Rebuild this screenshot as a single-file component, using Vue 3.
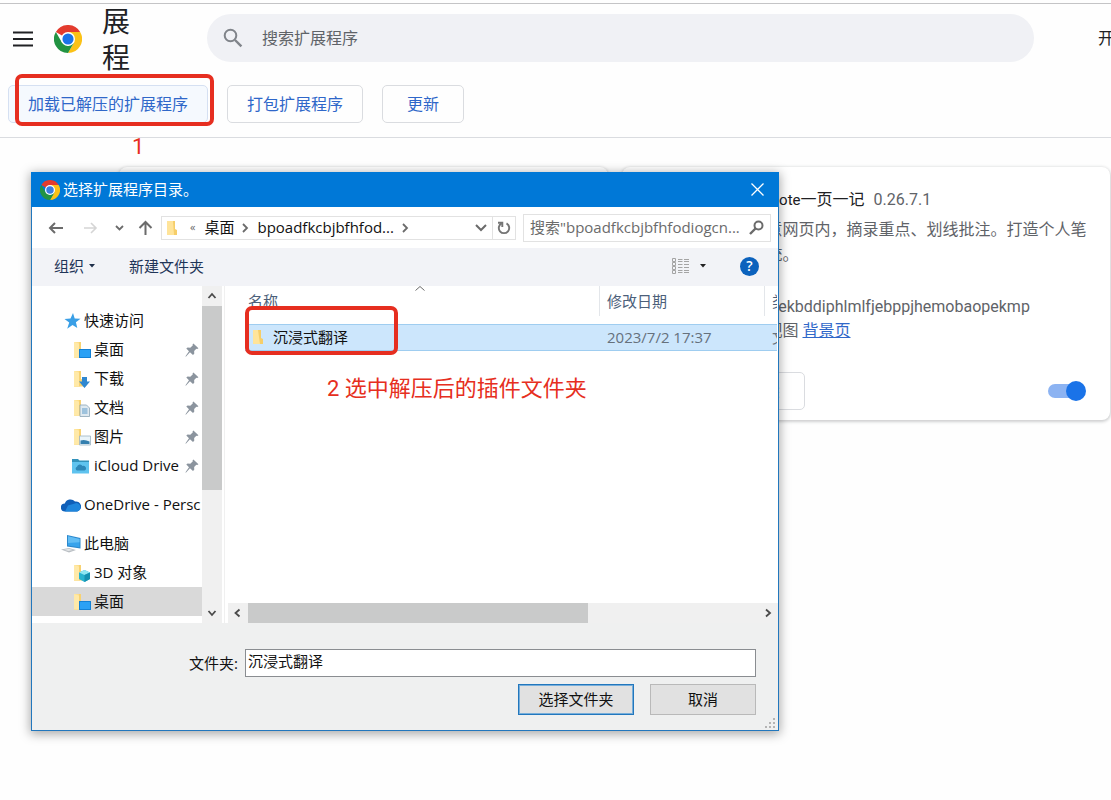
<script setup>
import { ref } from 'vue'

const query = ref('')
const folder = ref('沉浸式翻译')
const enabled = ref(true)
const dialogQuery = ref('')

const groups = [
  [
    { icon: 'star', label: '快速访问' },
    { icon: 'desktop', label: '桌面', child: true, pinned: true },
    { icon: 'download', label: '下载', child: true, pinned: true },
    { icon: 'document', label: '文档', child: true, pinned: true },
    { icon: 'picture', label: '图片', child: true, pinned: true },
    { icon: 'icloud', label: 'iCloud Drive', child: true, pinned: true },
  ],
  [{ icon: 'onedrive', label: 'OneDrive - Persc' }],
  [
    { icon: 'pc', label: '此电脑' },
    { icon: 'cube', label: '3D 对象', child: true },
    { icon: 'desktop', label: '桌面', child: true, selected: true },
  ],
]
</script>

<template>
  <div class="page">
    <header class="top">
      <button class="burger" type="button" aria-label="菜单">
        <svg width="20" height="16" viewBox="0 0 20 16"><path d="M0 1.5h20M0 8h20M0 14.5h20" stroke="#202124" stroke-width="2" /></svg>
      </button>
      <svg class="logo" width="28" height="28" viewBox="0 0 48 48">
        <path d="M24 24 3.2 12A24 24 0 0 1 44.8 12z" fill="#e33b2e" />
        <path d="M24 12h20.8A24 24 0 0 1 24 48l10.4-18z" fill="#fbc116" />
        <path d="M34.4 30 24 48A24 24 0 0 1 3.2 12l10.4 18L24 36z" fill="#229342" />
        <circle cx="24" cy="24" r="12" fill="#fff" />
        <circle cx="24" cy="24" r="9.5" fill="#1a73e8" />
      </svg>
      <h1>展程</h1>
      <label class="search">
        <svg width="20" height="20" viewBox="0 0 20 20" fill="none" stroke="#80848a" stroke-width="2"><circle cx="7.5" cy="7.5" r="5.8" /><path d="m12 12 6.4 6.4" stroke-width="2.4" /></svg>
        <input v-model="query" type="text" placeholder="搜索扩展程序" aria-label="搜索扩展程序" />
      </label>
      <span class="dev">开</span>
    </header>

    <nav class="actions">
      <button type="button" class="hover">加载已解压的扩展程序</button>
      <button type="button">打包扩展程序</button>
      <button type="button">更新</button>
    </nav>

    <main class="cards">
      <article class="card"></article>
      <article class="card">
        <div class="info">
          <h2><span class="latin">PageNote</span>一页一记 <span class="version">0.26.7.1</span></h2>
          <p class="desc">在任意网页内，摘录重点、划线批注。打造个人笔记系统。</p>
          <p class="ids">ID：ipekbddiphlmlfjebppjhemobaopekmp</p>
          <p class="ids">检查视图 <a href="#">背景页</a></p>
        </div>
        <div class="card-foot">
          <button type="button">移除</button>
          <input v-model="enabled" type="checkbox" class="toggle" aria-label="启用" />
        </div>
      </article>
    </main>

    <section class="dialog" role="dialog" aria-labelledby="dlg-title">
      <div class="titlebar">
        <svg width="20" height="20" viewBox="0 0 48 48">
          <path d="M24 24 3.2 12A24 24 0 0 1 44.8 12z" fill="#e33b2e" />
          <path d="M24 12h20.8A24 24 0 0 1 24 48l10.4-18z" fill="#fbc116" />
          <path d="M34.4 30 24 48A24 24 0 0 1 3.2 12l10.4 18L24 36z" fill="#229342" />
          <circle cx="24" cy="24" r="12" fill="#fff" />
          <circle cx="24" cy="24" r="9" fill="#3b7de0" />
        </svg>
        <h2 id="dlg-title">选择扩展程序目录。</h2>
        <button type="button" aria-label="关闭">
          <svg width="13" height="13" viewBox="0 0 13 13"><path d="m.5.5 12 12m0-12-12 12" stroke="#fff" stroke-width="1.3" /></svg>
        </button>
      </div>

      <div class="navbar">
        <div class="arrows">
          <button type="button" aria-label="后退"><svg width="15" height="14" viewBox="0 0 15 14" fill="none" stroke="#6b6b6b" stroke-width="2"><path d="M15 7H2m5-5L2 7l5 5" /></svg></button>
          <button type="button" aria-label="前进"><svg width="15" height="14" viewBox="0 0 15 14" fill="none" stroke="#d5d5d5" stroke-width="1.6"><path d="M1 7h12M8 2l5 5-5 5" /></svg></button>
          <button type="button" aria-label="最近位置" class="recent"><svg width="9" height="6" viewBox="0 0 9 6" fill="none" stroke="#6b6b6b" stroke-width="1.8"><path d="m1 1 3.5 3.5L8 1" /></svg></button>
          <button type="button" aria-label="上移"><svg width="15" height="15" viewBox="0 0 15 15" fill="none" stroke="#6b6b6b" stroke-width="2"><path d="M7.5 15V2M1.500 8l6-6 6 6" /></svg></button>
        </div>
        <div class="address">
          <svg class="f" width="12" height="16" viewBox="0 0 12 16"><path d="M1 1h8v14H1z" fill="#ffe08c" /><path d="M7 1h2v8l2 1v5H1z" fill="#f6ce69" /><path d="M1 1h6l1 14H1z" fill="#ffe49a" /></svg>
          <span class="laquo">«</span>
          <span class="crumb">桌面</span>
          <svg class="sep" width="7" height="10" viewBox="0 0 7 10" fill="none" stroke="#6b6b6b" stroke-width="1.8"><path d="m1 1 4 4-4 4" /></svg>
          <span class="crumb">bpoadfkcbjbfhfod...</span>
          <svg class="sep" width="7" height="10" viewBox="0 0 7 10" fill="none" stroke="#6b6b6b" stroke-width="1.8"><path d="m1 1 4 4-4 4" /></svg>
          <button type="button" class="drop" aria-label="历史"><svg width="12" height="8" viewBox="0 0 12 8" fill="none" stroke="#6b6b6b" stroke-width="2"><path d="m1 1 5 5 5-5" /></svg></button>
          <button type="button" class="reload" aria-label="刷新"><svg width="14" height="14" viewBox="0 0 14 14" fill="none" stroke="#757575" stroke-width="1.9"><path d="M9.500 2.400a5.200 5.200 0 1 1-5 0" /><path d="M1 1.800h4.300v4.200" /></svg></button>
        </div>
        <label class="find">
          <input v-model="dialogQuery" type="text" placeholder="搜索&quot;bpoadfkcbjbfhfodiogcn..." aria-label="搜索" />
          <svg width="15" height="15" viewBox="0 0 15 15" fill="none" stroke="#6b6b6b"><circle cx="9.500" cy="5.500" r="4" stroke-width="2" /><path d="M6.500 8.500 1 14" stroke-width="2.400" /></svg>
        </label>
      </div>

      <div class="toolbar">
        <button type="button">组织 <svg width="6" height="4" viewBox="0 0 6 4"><path d="M0 0h6L3 3.500z" fill="#1f2f4a" /></svg></button>
        <button type="button">新建文件夹</button>
        <button type="button" class="view" aria-label="更改视图">
          <svg width="17" height="16" viewBox="0 0 17 16" fill="none" stroke="#a4a4a4"><path d="M.5 .5h3v3h-3zM.5 4.500h3v3h-3zM.5 8.500h3v3h-3zM.5 12.500h3v3h-3z" /><path d="M6 1.500h4.500m1.500 0h5M6 3.500h4.500m1.500 0h5M6 6.500h4.500m1.500 0h5M6 9.500h4.500m1.500 0h5M6 12.500h4.500m1.500 0h5M6 14.500h4.500m1.500 0h5" /></svg>
          <svg width="6" height="4" viewBox="0 0 6 4"><path d="M0 0h6L3 3.500z" fill="#222" /></svg>
        </button>
        <button type="button" class="help" aria-label="帮助">?</button>
      </div>

      <div class="body">
        <div class="tree">
          <ul v-for="(group, g) in groups" :key="g">
            <li v-for="(item, i) in group" :key="i" :class="{ child: item.child, selected: item.selected }">
              <svg class="ico" width="20" height="18" viewBox="0 0 20 18">
                <path v-if="item.icon === 'star'" d="m12 1 1.700 5.500 5.800.2-4.600 3.600 1.400 5.700-4.800-3-5.300 3.700 2-6.200L3.500 7l6-.6z" fill="#3a9fe6" />
                <g v-else-if="item.icon === 'onedrive'">
                  <path d="M4 15.500a4 4 0 0 1-.2-8A6 6 0 0 1 14 5.500 5 5 0 0 1 16 15.500z" fill="#0f5fb8" />
                  <path d="M7 9.500 15.500 7a4.400 4.400 0 0 1 1 8.500H4z" fill="#1f86dc" />
                </g>
                <g v-else-if="item.icon === 'pc'">
                  <path d="m6 0 13.500 3v10.500L6 11.500z" fill="#2c88cc" /><path d="m7 1.300 11.500 2.600v8.300L7 10.400z" fill="#37a3ec" /><path d="m7 1.300 11.500 2.600v3.400L7 8z" fill="#62bdf4" />
                  <path d="m0 14.500 8-1.500 7 2-7 2.500z" fill="#b9bec3" /><path d="m3 14.700 5-1 4 1.200-4.500 1.200z" fill="#e3e6e8" />
                </g>
                <g v-else-if="item.icon === 'icloud'">
                  <path d="M1 2h6l1.500 1.500H18V16H1z" fill="#3292bb" /><path d="M1 5h17v11.500H1z" fill="#5fc3ef" />
                  <path d="M6 13.500a2 2 0 0 1 0-3.800 3 3 0 0 1 5.500-.7 2.300 2.300 0 0 1 2 4.500z" fill="#2d87b8" />
                </g>
                <g v-else>
                  <path d="M3 1h6v15.500H3z" fill="#ffe08c" /><path d="M8 1h2v8l3 1v6.500H3z" fill="#f8d271" /><path d="m3 1 5 1.500v14H3z" fill="#ffe9a8" />
                  <g v-if="item.icon === 'desktop'"><path d="M8 8h12v9H8z" fill="#1482d6" /><path d="M9 9h10v7H9z" fill="#2ba1f5" /></g>
                  <path v-else-if="item.icon === 'download'" d="M11 7h5v4.500h3L13.500 18 8 11.500h3z" fill="#2f87d0" />
                  <g v-else-if="item.icon === 'document'"><path d="M9 6h6.500l3 3v8.500H9z" fill="#dfe9f0" stroke="#8ca4b5" stroke-width=".8" /><path d="M11 10h5.500m-5.500 2h5.500m-5.500 2h5.500" stroke="#5c9bc9" /></g>
                  <g v-else-if="item.icon === 'picture'"><path d="M8.500 8h11v9h-11z" fill="#e9f4fa" stroke="#9db4c2" stroke-width=".8" /><path d="M9.500 12.500q4-1.500 9 1V16h-9z" fill="#347fae" /></g>
                  <g v-else><path d="m13.500 6 5.500 2.500V15l-5.500 3L8 15V8.500z" fill="#29b3cf" /><path d="M13.500 6 19 8.500 13.500 11 8 8.500z" fill="#8fe6f2" /><path d="M13.500 11 19 8.500V15l-5.500 3z" fill="#1590b0" /></g>
                </g>
              </svg>
              <span>{{ item.label }}</span>
              <svg v-if="item.pinned" class="pin" width="14" height="14" viewBox="0 0 13 13"><path d="m7.800.5 4.700 4.300-1.200.7-.8-.2-2 2.200.1 2.500-1.200 1.200-2.800-2.700L1 12.500H.3L3.700 7.600 1.200 5.200l1.200-1 2.500.1L7.300 2.200 7 1.300z" fill="#8b949e" /></svg>
            </li>
          </ul>
        </div>
        <div class="vbar">
          <svg width="20" height="20" viewBox="0 0 20 20" fill="none" stroke="#4a4a4a" stroke-width="1.8"><path d="m6.500 12 3.500-4 3.500 4" /></svg>
          <div class="vthumb"></div>
          <svg width="20" height="20" viewBox="0 0 20 20" fill="none" stroke="#4a4a4a" stroke-width="1.8"><path d="m6.500 8 3.500 4 3.500-4" /></svg>
        </div>
        <div class="files">
          <svg class="sort" width="10" height="5" viewBox="0 0 10 5" fill="none" stroke="#6b6b6b"><path d="m.5 4.500 4.500-4 4.500 4" /></svg>
          <table>
            <colgroup><col class="c-name" /><col class="c-date" /><col /></colgroup>
            <thead>
              <tr><th><div>名称</div></th><th><div>修改日期</div></th><th><div>类</div></th></tr>
            </thead>
            <tbody>
              <tr>
                <td class="name">
                  <div>
                    <svg width="12" height="16" viewBox="0 0 12 16"><path d="M1 1h7v14H1z" fill="#ffe08c" /><path d="M6 1h3v8l2 1v5H1z" fill="#f6ce69" /><path d="M1 1h5l2 14H1z" fill="#ffe49a" /></svg>
                    沉浸式翻译
                  </div>
                </td>
                <td>2023/7/2 17:37</td>
                <td>文</td>
              </tr>
            </tbody>
          </table>
          <div class="hbar">
            <svg width="20" height="20" viewBox="0 0 20 20" fill="none" stroke="#4a4a4a" stroke-width="1.8"><path d="m11.500 6.500-4 3.500 4 3.500" /></svg>
            <div class="hthumb"></div>
            <svg width="20" height="20" viewBox="0 0 20 20" fill="none" stroke="#4a4a4a" stroke-width="1.8"><path d="m8 6.500 4 3.500-4 3.500" /></svg>
          </div>
        </div>
      </div>

      <footer class="foot">
        <div class="field">
          <label for="folder">文件夹:</label>
          <input id="folder" v-model="folder" type="text" />
        </div>
        <div class="buttons">
          <button type="button" class="primary">选择文件夹</button>
          <button type="button">取消</button>
        </div>
        <svg class="grip" width="11" height="11" viewBox="0 0 11 11" fill="#b4b4b4"><path d="M8 0h2v2H8zM4 4h2v2H4zM8 4h2v2H8zM0 8h2v2H0zM4 8h2v2H4zM8 8h2v2H8z" /></svg>
      </footer>
    </section>

    <div class="mark mark-load"></div>
    <div class="note note-one">1</div>
    <div class="mark mark-folder"></div>
    <div class="note note-two">2 选中解压后的插件文件夹</div>
  </div>
</template>

<style>
body {
  background: #fefefe;
  overflow: hidden;
}
</style>

<style scoped>
* {
  box-sizing: border-box;
}
svg {
  display: block;
  flex: none;
}
button {
  font: inherit;
  color: inherit;
  background: none;
  border: 0;
  padding: 0;
}
input {
  font: inherit;
  color: inherit;
  min-width: 0;
}
h1,
h2,
p,
ul {
  margin: 0;
  padding: 0;
  font-weight: 400;
  list-style: none;
}
.page {
  position: relative;
  min-height: 100vh;
  overflow: hidden;
  font: 16px/24px Roboto, 'Noto Sans CJK SC', sans-serif;
  color: #202124;
}
.top {
  display: flex;
  align-items: center;
  height: 73px;
  margin-top: 3px;
  padding-left: 13px;
  border-top: 1px solid #c4c4c6;
}
.burger {
  margin-right: 21px;
}
h1 {
  width: 28px;
  margin: 2px 77px 0 20px;
  font-size: 28px;
  line-height: 36px;
  word-break: break-all;
}
.search {
  display: flex;
  flex: 1;
  align-items: center;
  gap: 19px;
  height: 48px;
  margin-bottom: 4px;
  padding: 0 16px;
  border-radius: 24px;
  background: #f0f1f5;
}
.search input {
  flex: 1;
  padding: 2px 0 0;
  border: 0;
  background: none;
  outline: 0;
}
.search input::placeholder {
  color: #5f6368;
}
.burger,
.logo {
  margin-bottom: 3px;
}
.dev {
  width: 13px;
  margin: 0 0 2px 64px;
  overflow: hidden;
}
.actions {
  display: flex;
  gap: 19px;
  padding: 9px 8px 14px;
  border-bottom: 1px solid #dadce0;
}
.actions button,
.card-foot button {
  height: 38px;
  min-width: 82px;
  padding: 2px 19px 0;
  border: 1px solid #dadce0;
  border-radius: 5px;
  color: #2f67c9;
}
.actions .hover {
  background: #f5f9fe;
  border-color: #d5e0f2;
}
.cards {
  display: grid;
  grid-template-columns: 1fr 1fr;
  gap: 14px;
  padding: 29px 1px 0 119px;
}
.card {
  border-radius: 8px;
  background: #fff;
  box-shadow: 0 1px 3px 1px rgba(60, 64, 67, 0.24);
}
.info {
  padding: 21px 20px 0 113px;
  color: #5f6368;
}
.info h2 {
  margin-bottom: 5px;
  font-size: 16px;
  color: #202124;
}
.info .latin {
  font-size: 15px;
}
.info .version {
  margin-left: 5px;
  color: #5f6368;
}
.desc {
  margin-bottom: 28px;
  line-height: 25px;
}
.ids {
  white-space: nowrap;
}
.ids a {
  color: #2f67c9;
}
.card-foot {
  display: flex;
  align-items: center;
  justify-content: space-between;
  padding: 29px 24px 10px 101px;
}
.toggle {
  position: relative;
  appearance: none;
  width: 38px;
  height: 20px;
  margin: 0;
}
.toggle::before {
  content: '';
  position: absolute;
  inset: 3px 6px 3px 0;
  border-radius: 7px;
  background: #8cb3f2;
}
.toggle::after {
  content: '';
  position: absolute;
  top: 0;
  right: 0;
  width: 20px;
  height: 20px;
  border-radius: 50%;
  background: #1a73e8;
}
.dialog {
  position: absolute;
  left: 31px;
  top: 172px;
  width: 748px;
  border: 1px solid #2277bd;
  background: #fff;
  box-shadow: 0 2px 10px 1px rgba(0, 0, 0, 0.34);
  font: 15px/20px 'Open Sans', 'Noto Sans CJK SC', sans-serif;
  color: #111;
}
.titlebar {
  display: flex;
  align-items: center;
  gap: 3px;
  height: 35px;
  margin: -1px -1px 0;
  padding: 0 15px 0 9px;
  background: #0078d7;
  color: #fff;
}
.titlebar h2 {
  flex: 1;
  padding-bottom: 2px;
  font-size: 15px;
}
.navbar {
  display: flex;
  align-items: center;
  height: 41px;
  padding: 0 7px 0 16px;
}
.arrows {
  display: flex;
  align-items: center;
  gap: 20px;
  width: 113px;
}
.arrows .recent {
  margin: 0 -6px 0 -3px;
}
.address {
  display: flex;
  align-items: center;
  flex: 1;
  height: 24px;
  padding-left: 4px;
  border: 1px solid #e2e2e2;
}
.crumb {
  padding-bottom: 2px;
}
.laquo {
  margin: 0 9px 0 12px;
  padding-bottom: 2px;
  font-size: 11px;
  color: #666;
}
.sep {
  margin: 0 8px;
}
.drop {
  margin-left: auto;
  padding-right: 5px;
}
.reload {
  display: flex;
  align-items: center;
  justify-content: center;
  width: 23px;
  height: 22px;
  border-left: 1px solid #e2e2e2;
}
.find {
  display: flex;
  align-items: center;
  gap: 8px;
  width: 248px;
  height: 28px;
  margin-left: 7px;
  padding: 0 6px;
  border: 1px solid #e2e2e2;
}
.find input {
  flex: 1;
  padding: 0 0 2px;
  border: 0;
  outline: 0;
}
.find input::placeholder {
  color: #6b6b6b;
}
.toolbar {
  display: flex;
  align-items: center;
  height: 38px;
  padding: 0 19px 2px 22px;
  background: #f2f3f7;
  color: #1f3558;
}
.toolbar button {
  display: flex;
  align-items: center;
  gap: 5px;
  margin-right: 34px;
}
.toolbar .view {
  gap: 11px;
  margin-left: auto;
}
.toolbar .help {
  justify-content: center;
  width: 19px;
  height: 19px;
  margin-right: 0;
  border-radius: 50%;
  background: #0c62bd;
  color: #fff;
  font-size: 14px;
  font-weight: 600;
}
.body {
  display: flex;
  height: 337px;
}
.tree {
  width: 170px;
  padding-top: 20px;
}
.tree ul {
  margin-bottom: 10px;
}
.tree li {
  display: flex;
  align-items: center;
  gap: 3px;
  height: 29px;
  padding-left: 29px;
  white-space: nowrap;
  overflow: hidden;
}
.tree span {
  padding-bottom: 2px;
}
.tree .child {
  padding-left: 39px;
}
.tree .selected {
  background: #d9d9d9;
}
.pin {
  margin: 0 3px 0 auto;
}
.vbar {
  display: flex;
  flex-direction: column;
  width: 20px;
  background: #f0f0f0;
}
.vthumb {
  height: 184px;
  margin-bottom: auto;
  background: #c9caca;
}
.files {
  position: relative;
  display: flex;
  flex: 1;
  flex-direction: column;
  justify-content: space-between;
  min-width: 0;
  margin-left: 2px;
  padding-left: 3px;
  border-left: 1px solid #f0f0f0;
}
.sort {
  position: absolute;
  left: 190px;
  top: 0;
}
table {
  table-layout: fixed;
  width: 532px;
  margin-left: 17px;
  border-spacing: 0;
}
.c-name {
  width: 355px;
}
.c-date {
  width: 165px;
}
th,
td {
  padding: 0;
  font-weight: 400;
  text-align: left;
  white-space: nowrap;
  overflow: hidden;
}
th {
  height: 38px;
  vertical-align: top;
  color: #4c607a;
}
th div {
  height: 30px;
  padding-left: 7px;
  line-height: 31px;
  border-right: 1px solid #e3e6ea;
}
th:first-child div {
  padding-left: 3px;
}
th:last-child div {
  border: 0;
}
td {
  height: 27px;
  padding: 0 0 2px 7px;
  border: 1px solid #9fcdf0;
  border-width: 1px 0;
  background: #cce6fc;
  color: #66717c;
}
.name div {
  display: flex;
  align-items: center;
  gap: 9px;
  color: #111;
}
.hbar {
  display: flex;
  justify-content: space-between;
  background: #f0f0f0;
}
.hthumb {
  width: 340px;
  margin-right: auto;
  background: #c9caca;
}
.foot {
  position: relative;
  padding: 26px 22px 15px 22px;
  background: #eff0f0;
}
.field {
  display: flex;
  align-items: center;
  justify-content: flex-end;
  gap: 7px;
}
.field input {
  width: 511px;
  height: 28px;
  padding: 0 2px 5px;
  border: 1px solid #8a8d91;
  background: #fff;
}
.buttons {
  display: flex;
  justify-content: flex-end;
  gap: 16px;
  margin-top: 7px;
}
.buttons button {
  width: 106px;
  height: 31px;
  padding-bottom: 2px;
  border: 1px solid #b9b9b9;
  background: #e1e1e1;
}
.buttons .primary {
  width: 116px;
  border-color: #2277bd;
  box-shadow: inset 0 0 0 1px #77aeda;
}
.grip {
  position: absolute;
  right: 2px;
  bottom: 1px;
}
.mark {
  position: absolute;
  border: 4px solid #e62e20;
  border-radius: 7px;
}
.mark-load {
  left: 15px;
  top: 74px;
  width: 199px;
  height: 52px;
}
.mark-folder {
  left: 245px;
  top: 306px;
  width: 153px;
  height: 49px;
}
.note {
  position: absolute;
  font-size: 22px;
  line-height: 28px;
  color: #e62e20;
}
.note-one {
  left: 132px;
  top: 133px;
}
.note-two {
  left: 327px;
  top: 375px;
}
</style>
